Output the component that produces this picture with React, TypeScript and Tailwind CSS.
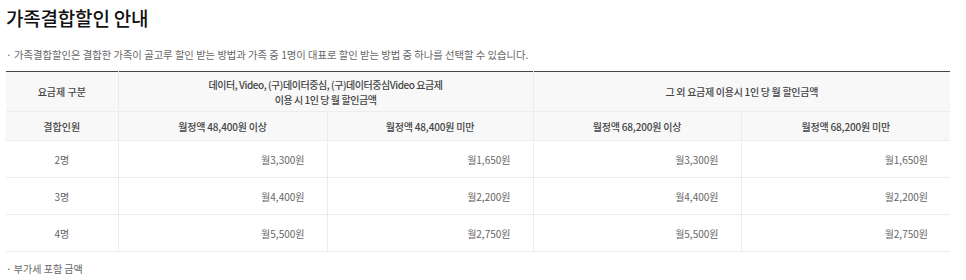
const font = { fontFamily: '"Noto Sans CJK KR", "Noto Sans", sans-serif' }

const rows = [
  { people: "2명", values: ["월3,300원", "월1,650원", "월3,300원", "월1,650원"] },
  { people: "3명", values: ["월4,400원", "월2,200원", "월4,400원", "월2,200원"] },
  { people: "4명", values: ["월5,500원", "월2,750원", "월5,500원", "월2,750원"] },
]

const subHeads = [
  "월정액 48,400원 이상",
  "월정액 48,400원 미만",
  "월정액 68,200원 이상",
  "월정액 68,200원 미만",
]

export default function App() {
  return (
    <div className="w-[966px] h-[280px] bg-white px-[6px] overflow-hidden" style={font}>
      {/* 제목 */}
      <h1 className="pt-[4px] text-[19px] leading-[28px] font-medium text-[#111] tracking-[-0.2px]">
        가족결합할인 안내
      </h1>

      {/* 안내 문구 */}
      <p className="mt-[16px] text-[10.3px] leading-[14px] text-[#666]">
        · 가족결합할인은 결합한 가족이 골고루 할인 받는 방법과 가족 중 1명이 대표로 할인 받는 방법 중 하나를 선택할 수 있습니다.
      </p>

      {/* 할인 표 */}
      <table className="mt-[9px] w-[944px] table-fixed border-collapse border-t border-[#444] text-[10px]">
        <colgroup>
          <col className="w-[112px]" />
          <col className="w-[209px]" />
          <col className="w-[206px]" />
          <col className="w-[208px]" />
          <col className="w-[209px]" />
        </colgroup>
        <thead>
          <tr className="h-[40px] bg-[#f8f8f8]">
            <th className="border-b border-[#ececec] font-medium text-[#444]">요금제 구분</th>
            <th colSpan={2} className="border-b border-l border-[#ececec] font-medium text-[#444] leading-[15px] tracking-[-0.45px]">
              데이터, Video, (구)데이터중심, (구)데이터중심Video 요금제
              <br />
              이용 시 1인 당 월 할인금액
            </th>
            <th colSpan={2} className="border-b border-l border-[#ececec] font-medium text-[#444] tracking-[-0.3px]">
              그 외 요금제 이용시 1인 당 월 할인금액
            </th>
          </tr>
          <tr className="h-[29px] bg-[#f8f8f8]">
            <th className="border-b border-[#ececec] font-medium text-[#444]">결합인원</th>
            {subHeads.map((s) => (
              <th key={s} className="border-b border-l border-[#ececec] font-medium text-[#444] tracking-[-0.2px]">
                {s}
              </th>
            ))}
          </tr>
        </thead>
        <tbody>
          {rows.map((r) => (
            <tr key={r.people} className="h-[37px]">
              <td className="border-b border-[#ececec] text-center text-[#666]">{r.people}</td>
              {r.values.map((v, i) => (
                <td key={i} className="border-b border-l border-[#ececec] pr-[22px] text-right text-[#666]">
                  {v}
                </td>
              ))}
            </tr>
          ))}
        </tbody>
      </table>

      {/* 부가세 안내 */}
      <p className="mt-[10px] text-[10px] leading-[14px] text-[#666]">· 부가세 포함 금액</p>
    </div>
  )
}
